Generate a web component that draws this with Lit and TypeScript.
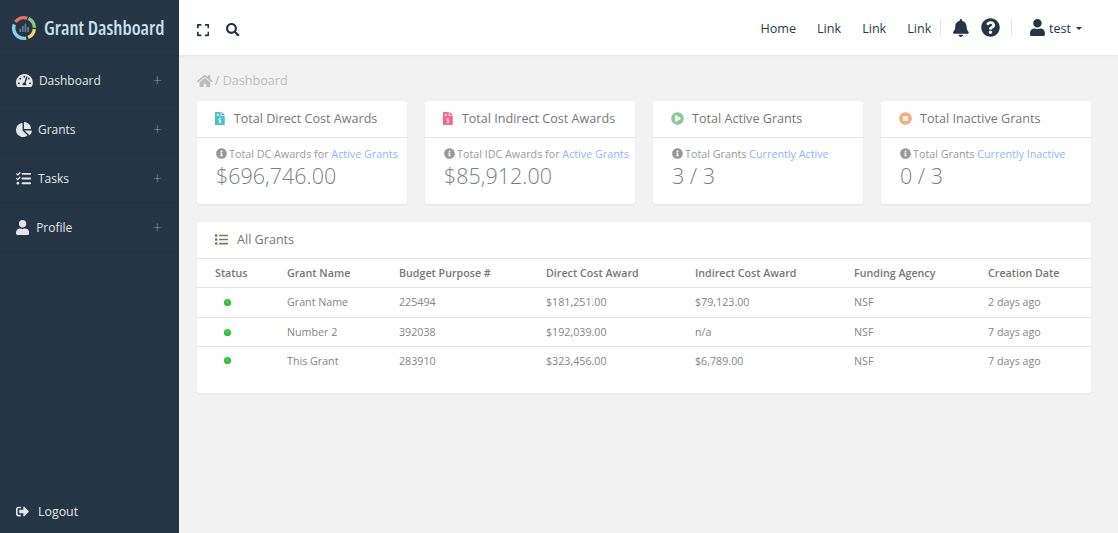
import { LitElement, html, css, svg } from 'lit';
import { customElement } from 'lit/decorators.js';

// font awesome style glyphs, [viewBox width, path]
const ICONS: Record<string, [number, string]> = {
  user: [448, 'M224 256c70.7 0 128-57.3 128-128S294.7 0 224 0 96 57.3 96 128s57.3 128 128 128zm89.6 32h-16.7c-22.2 10.2-46.9 16-72.9 16s-50.6-5.8-72.9-16h-16.7C60.2 288 0 348.2 0 422.4V464c0 26.5 21.5 48 48 48h352c26.5 0 48-21.5 48-48v-41.6c0-74.2-60.2-134.4-134.4-134.4z'],
  bell: [448, 'M224 512c35.32 0 63.97-28.65 63.97-64H160.03c0 35.35 28.65 64 63.97 64zm215.39-149.71c-19.32-20.76-55.47-51.99-55.47-154.29 0-77.7-54.48-139.9-127.94-155.16V32c0-17.67-14.32-32-31.98-32s-31.98 14.33-31.98 32v20.84C118.56 68.1 64.08 130.3 64.08 208c0 102.3-36.15 133.53-55.47 154.29-6 6.45-8.66 14.16-8.61 21.71.11 16.4 12.98 32 32.1 32h383.8c19.12 0 32-15.6 32.1-32 .05-7.55-2.61-15.27-8.61-21.71z'],
  question: [512, 'M504 256c0 136.997-111.043 248-248 248S8 392.997 8 256C8 119.083 119.043 8 256 8s248 111.083 248 248zM262.655 90c-54.497 0-89.255 22.957-116.549 63.758-3.536 5.286-2.353 12.415 2.715 16.258l34.699 26.31c5.205 3.947 12.621 3.008 16.665-2.122 17.864-22.658 30.113-35.797 57.303-35.797 20.429 0 45.698 13.148 45.698 32.958 0 14.976-12.363 22.667-32.534 33.976C247.128 238.528 216 254.941 216 296v4c0 6.627 5.373 12 12 12h56c6.627 0 12-5.373 12-12v-1.333c0-28.462 83.186-29.647 83.186-106.667 0-58.002-60.165-102-116.531-102zM256 338c-25.365 0-46 20.635-46 46 0 25.364 20.635 46 46 46s46-20.636 46-46c0-25.365-20.635-46-46-46z'],
  search: [512, 'M505 442.7L405.3 343c-4.5-4.5-10.6-7-17-7H372c27.6-35.3 44-79.7 44-128C416 93.1 322.9 0 208 0S0 93.1 0 208s93.1 208 208 208c48.3 0 92.7-16.4 128-44v16.3c0 6.4 2.5 12.5 7 17l99.7 99.7c9.4 9.4 24.6 9.4 33.9 0l28.3-28.3c9.4-9.4 9.4-24.6.1-34zM208 336c-70.7 0-128-57.2-128-128 0-70.7 57.2-128 128-128 70.7 0 128 57.2 128 128 0 70.7-57.2 128-128 128z'],
  expand: [448, 'M0 180V56c0-13.3 10.7-24 24-24h124c6.6 0 12 5.4 12 12v40c0 6.6-5.4 12-12 12H64v84c0 6.6-5.4 12-12 12H12c-6.6 0-12-5.4-12-12zM288 44v40c0 6.6 5.4 12 12 12h84v84c0 6.6 5.4 12 12 12h40c6.6 0 12-5.4 12-12V56c0-13.3-10.7-24-24-24H300c-6.6 0-12 5.4-12 12zm148 276h-40c-6.6 0-12 5.4-12 12v84h-84c-6.6 0-12 5.4-12 12v40c0 6.6 5.4 12 12 12h124c13.3 0 24-10.7 24-24V332c0-6.6-5.4-12-12-12zM160 468v-40c0-6.6-5.4-12-12-12H64v-84c0-6.6-5.4-12-12-12H12c-6.6 0-12 5.4-12 12v124c0 13.3 10.7 24 24 24h124c6.6 0 12-5.4 12-12z'],
  info: [512, 'M256 8C119.043 8 8 119.083 8 256c0 136.997 111.043 248 248 248s248-111.003 248-248C504 119.083 392.957 8 256 8zm0 110c23.196 0 42 18.804 42 42s-18.804 42-42 42-42-18.804-42-42 18.804-42 42-42zm56 254c0 6.627-5.373 12-12 12h-88c-6.627 0-12-5.373-12-12v-24c0-6.627 5.373-12 12-12h12v-64h-12c-6.627 0-12-5.373-12-12v-24c0-6.627 5.373-12 12-12h64c6.627 0 12 5.373 12 12v100h12c6.627 0 12 5.373 12 12v24z'],
  play: [512, 'M256 8C119 8 8 119 8 256s111 248 248 248 248-111 248-248S393 8 256 8zm115.7 272l-176 101c-15.8 8.8-35.7-2.5-35.7-21V152c0-18.4 19.8-29.8 35.7-21l176 107c16.4 9.2 16.4 32.9 0 42z'],
  stop: [512, 'M256 8C119 8 8 119 8 256s111 248 248 248 248-111 248-248S393 8 256 8zm96 328c0 8.8-7.2 16-16 16H176c-8.8 0-16-7.2-16-16V176c0-8.8 7.2-16 16-16h160c8.8 0 16 7.2 16 16v160z'],
  home: [576, 'M280.37 148.26L96 300.11V464a16 16 0 0 0 16 16l112.06-.29a16 16 0 0 0 15.92-16V368a16 16 0 0 1 16-16h64a16 16 0 0 1 16 16v95.64a16 16 0 0 0 16 16.05L464 480a16 16 0 0 0 16-16V300L295.67 148.26a12.19 12.19 0 0 0-15.3 0zM571.6 251.47L488 182.56V44.05a12 12 0 0 0-12-12h-56a12 12 0 0 0-12 12v72.61L318.47 43a48 48 0 0 0-61 0L4.34 251.47a12 12 0 0 0-1.6 16.9l25.5 31A12 12 0 0 0 45.15 301l235.22-193.74a12.19 12.19 0 0 1 15.3 0L530.9 301a12 12 0 0 0 16.9-1.6l25.5-31a12 12 0 0 0-1.7-16.93z'],
  invoice: [384, 'M377 105L279.1 7c-4.5-4.5-10.6-7-17-7H256v128h128v-6.1c0-6.3-2.5-12.4-7-16.9zm-153 31V0H24C10.7 0 0 10.7 0 24v464c0 13.3 10.7 24 24 24h336c13.3 0 24-10.7 24-24V160H248c-13.2 0-24-10.8-24-24zM64 72c0-4.42 3.58-8 8-8h80c4.42 0 8 3.58 8 8v16c0 4.42-3.58 8-8 8H72c-4.42 0-8-3.58-8-8V72zm0 80v-16c0-4.42 3.58-8 8-8h80c4.42 0 8 3.58 8 8v16c0 4.42-3.58 8-8 8H72c-4.42 0-8-3.58-8-8zm144 263.88V440c0 4.42-3.58 8-8 8h-16c-4.42 0-8-3.58-8-8v-24.29c-11.29-.58-22.27-4.52-31.37-11.35-3.9-2.93-4.1-8.77-.57-12.14l11.75-11.21c2.77-2.64 6.89-2.76 10.13-.73 3.87 2.42 8.26 3.72 12.82 3.72h28.11c6.5 0 11.8-5.92 11.8-13.19 0-5.95-3.61-11.19-8.77-12.73l-45-13.5c-18.59-5.58-31.58-23.42-31.58-43.39 0-24.52 19.05-44.44 42.67-45.07V232c0-4.42 3.58-8 8-8h16c4.42 0 8 3.58 8 8v24.29c11.29.58 22.27 4.51 31.37 11.35 3.9 2.93 4.1 8.77.57 12.14l-11.75 11.21c-2.77 2.64-6.89 2.76-10.13.73-3.87-2.43-8.26-3.72-12.82-3.72h-28.11c-6.5 0-11.8 5.92-11.8 13.19 0 5.95 3.61 11.19 8.77 12.73l45 13.5c18.59 5.58 31.58 23.42 31.58 43.39 0 24.53-19.05 44.44-42.67 45.07z'],
  gauge: [576, 'M288 32C128.94 32 0 160.94 0 320c0 52.8 14.25 102.26 39.06 144.8 5.61 9.62 16.3 15.2 27.44 15.2h443c11.14 0 21.83-5.58 27.44-15.2C561.75 422.26 576 372.8 576 320c0-159.06-128.94-288-288-288zm0 64c14.71 0 26.58 10.13 30.32 23.65-1.11 2.26-2.64 4.23-3.45 6.67l-9.22 27.67c-5.13 3.49-10.97 6.01-17.64 6.01-17.67 0-32-14.33-32-32S270.33 96 288 96zM96 384c-17.67 0-32-14.33-32-32s14.33-32 32-32 32 14.33 32 32-14.33 32-32 32zm48-160c-17.67 0-32-14.33-32-32s14.33-32 32-32 32 14.33 32 32-14.33 32-32 32zm246.77-72.41l-61.33 184C343.13 347.33 352 364.54 352 384c0 11.72-3.38 22.55-8.88 32H232.88c-5.5-9.45-8.88-20.28-8.88-32 0-33.94 26.5-61.43 59.9-63.59l61.34-184.01c4.17-12.56 17.73-19.45 30.36-15.17 12.57 4.19 19.35 17.79 15.17 30.36zm14.66 57.2l15.52-46.55c3.47-1.29 7.13-2.23 11.05-2.23 17.67 0 32 14.33 32 32s-14.33 32-32 32c-11.38-.01-20.89-6.28-26.57-15.22zM480 384c-17.67 0-32-14.33-32-32s14.33-32 32-32 32 14.33 32 32-14.33 32-32 32z'],
  pie: [544, 'M527.79 288H290.5l158.03 158.03c6.04 6.04 15.98 6.53 22.19.68 38.7-36.46 65.32-85.61 73.13-140.86 1.34-9.46-6.51-17.85-16.06-17.85zm-15.83-64.8C503.72 103.74 408.26 8.28 288.8.04 279.68-.59 272 7.1 272 16.24V240h223.77c9.14 0 16.82-7.68 16.19-16.8zM224 288V50.71c0-9.55-8.39-17.4-17.84-16.06C86.99 51.49-4.1 155.6.14 280.37 4.5 408.51 114.83 513.59 243.03 511.98c50.4-.63 96.97-16.87 135.26-44.03 7.9-5.6 8.42-17.23 1.57-24.08L224 288z'],
  tasks: [512, 'M139.61 35.5a12 12 0 0 0-17 0L58.93 98.81l-22.7-22.12a12 12 0 0 0-17 0L3.53 92.41a12 12 0 0 0 0 17l47.59 47.4a12.78 12.78 0 0 0 17.61 0l15.59-15.62L156.52 69a12.09 12.09 0 0 0 .09-17zm0 159.19a12 12 0 0 0-17 0l-63.68 63.72-22.7-22.1a12 12 0 0 0-17 0L3.53 252a12 12 0 0 0 0 17L51 316.5a12.77 12.77 0 0 0 17.6 0l15.7-15.69 72.2-72.22a12 12 0 0 0 .09-16.9zM64 368c-26.49 0-48.59 21.5-48.59 48S37.53 464 64 464a48 48 0 0 0 0-96zm432 16H208a16 16 0 0 0-16 16v32a16 16 0 0 0 16 16h288a16 16 0 0 0 16-16v-32a16 16 0 0 0-16-16zm0-320H208a16 16 0 0 0-16 16v32a16 16 0 0 0 16 16h288a16 16 0 0 0 16-16V80a16 16 0 0 0-16-16zm0 160H208a16 16 0 0 0-16 16v32a16 16 0 0 0 16 16h288a16 16 0 0 0 16-16v-32a16 16 0 0 0-16-16z'],
  list: [512, 'M80 368H16a16 16 0 0 0-16 16v64a16 16 0 0 0 16 16h64a16 16 0 0 0 16-16v-64a16 16 0 0 0-16-16zm0-320H16A16 16 0 0 0 0 64v64a16 16 0 0 0 16 16h64a16 16 0 0 0 16-16V64a16 16 0 0 0-16-16zm0 160H16a16 16 0 0 0-16 16v64a16 16 0 0 0 16 16h64a16 16 0 0 0 16-16v-64a16 16 0 0 0-16-16zm416 176H176a16 16 0 0 0-16 16v32a16 16 0 0 0 16 16h320a16 16 0 0 0 16-16v-32a16 16 0 0 0-16-16zm0-320H176a16 16 0 0 0-16 16v32a16 16 0 0 0 16 16h320a16 16 0 0 0 16-16V80a16 16 0 0 0-16-16zm0 160H176a16 16 0 0 0-16 16v32a16 16 0 0 0 16 16h320a16 16 0 0 0 16-16v-32a16 16 0 0 0-16-16z'],
  logout: [512, 'M497 273L329 441c-15 15-41 4.5-41-17v-96H152c-13.3 0-24-10.7-24-24v-96c0-13.3 10.7-24 24-24h136V88c0-21.4 25.9-32 41-17l168 168c9.3 9.4 9.3 24.6 0 34zM192 436v-40c0-6.6-5.4-12-12-12H96c-17.7 0-32-14.3-32-32V160c0-17.7 14.3-32 32-32h84c6.6 0 12-5.4 12-12V76c0-6.6-5.4-12-12-12H96c-53 0-96 43-96 96v192c0 53 43 96 96 96h84c6.6 0 12-5.4 12-12z'],
};

const icon = (name: string, size: number) => {
  const [w, d] = ICONS[name];
  return html`<svg class="icon" viewBox="0 0 ${w} 512" height=${size} width=${(size * w) / 512} fill="currentColor"><path d=${d}></path></svg>`;
};

const MENU = [
  { label: 'Dashboard', icon: 'gauge', gap: 'g-dash' },
  { label: 'Grants', icon: 'pie', gap: 'g-grants' },
  { label: 'Tasks', icon: 'tasks', gap: 'g-tasks' },
  { label: 'Profile', icon: 'user', gap: 'g-profile' },
];

const CARDS = [
  { title: 'Total Direct Cost Awards', icon: 'invoice', tone: 'teal', head: '', note: 'Total DC Awards for ', link: 'Active Grants', value: '$696,746.00' },
  { title: 'Total Indirect Cost Awards', icon: 'invoice', tone: 'pink', head: '', note: 'Total IDC Awards for ', link: 'Active Grants', value: '$85,912.00' },
  { title: 'Total Active Grants', icon: 'play', tone: 'green', head: 'tight', note: 'Total Grants ', link: 'Currently Active', value: '3 / 3' },
  { title: 'Total Inactive Grants', icon: 'stop', tone: 'orange', head: 'tight', note: 'Total Grants ', link: 'Currently Inactive', value: '0 / 3' },
];

const COLUMNS = ['Status', 'Grant Name', 'Budget Purpose #', 'Direct Cost Award', 'Indirect Cost Award', 'Funding Agency', 'Creation Date'];

const GRANTS = [
  ['Grant Name', '225494', '$181,251.00', '$79,123.00', 'NSF', '2 days ago'],
  ['Number 2', '392038', '$192,039.00', 'n/a', 'NSF', '7 days ago'],
  ['This Grant', '283910', '$323,456.00', '$6,789.00', 'NSF', '7 days ago'],
];

// ring segments of the logo, drawn with a dashed circle
const LOGO_ARCS = [
  { color: '#e8705f', start: 215, sweep: 72 },
  { color: '#8fc77e', start: 295, sweep: 63 },
  { color: '#f1d66b', start: 6, sweep: 60 },
  { color: '#7fd6ea', start: 78, sweep: 122 },
];

@customElement('app-root')
export class AppRoot extends LitElement {
  static styles = css`
    :host {
      display: flex;
      height: 533px;
      overflow: hidden;
      font-family: 'Open Sans', sans-serif;
      font-size: 12.6px;
      color: #777;
      background: #f2f2f2;
    }

    .icon {
      display: block;
      flex: none;
    }

    .sidebar {
      width: 179px;
      flex: none;
      display: flex;
      flex-direction: column;
      background: #263544;
      color: #e3e6e8;
    }

    .brand {
      height: 56px;
      flex: none;
      display: flex;
      align-items: center;
      gap: 7px;
      padding-left: 11px;
      box-sizing: border-box;
      border-bottom: 1px solid #233140;
    }

    .brand-name {
      font-size: 19.3px;
      font-weight: 600;
      font-stretch: 75%;
      color: #c6e2ee;
      white-space: nowrap;
    }

    .menu-item {
      height: 49px;
      flex: none;
      display: flex;
      align-items: center;
      padding: 0 17px 0 16px;
      box-sizing: border-box;
      font-size: 12px;
      border-bottom: 1px solid #233140;
    }

    .menu-item .label {
      flex: 1;
    }

    .g-dash { margin-right: 6px; }
    .g-grants { margin-right: 6px; }
    .g-tasks { margin-right: 7px; }
    .g-profile { margin-right: 7px; }

    .plus {
      color: #8b949d;
      font-size: 16px;
      font-weight: 300;
      line-height: 1;
    }

    .logout {
      margin-top: auto;
      height: 44px;
      flex: none;
      display: flex;
      align-items: center;
      gap: 9px;
      padding-left: 16px;
      font-size: 12.4px;
    }

    .main {
      flex: 1;
      min-width: 0;
      display: flex;
      flex-direction: column;
    }

    .topbar {
      height: 55px;
      flex: none;
      display: flex;
      align-items: center;
      padding: 0 36px 0 18px;
      box-sizing: border-box;
      background: #fff;
      color: #263544;
      box-shadow: 0 1px 3px rgba(0, 0, 0, 0.06);
      position: relative;
    }

    .tools {
      display: flex;
      align-items: center;
      gap: 17px;
      flex: 1;
      margin-top: 4px;
    }

    .nav {
      display: flex;
      align-items: center;
      gap: 21px;
      margin-right: 9px;
      padding-top: 2px;
      color: #2c3a47;
    }

    .sep {
      width: 1px;
      height: 17px;
      background: #e4e4e4;
    }

    .alerts {
      display: flex;
      align-items: center;
      gap: 12px;
      margin: 0 11px 0 12px;
    }

    .account {
      display: flex;
      align-items: center;
      gap: 4px;
      margin-left: 18px;
    }

    .account span:first-of-type {
      padding-top: 2px;
    }

    .caret {
      width: 0;
      height: 0;
      margin: 2px 0 0 1px;
      border: 3.5px solid transparent;
      border-top-color: #263544;
      border-bottom: 0;
    }

    .content {
      flex: 1;
      padding: 16px 27px 0 18px;
    }

    .crumb {
      display: flex;
      align-items: center;
      gap: 2px;
      height: 19px;
      color: #bdbdbd;
    }

    .cards {
      display: grid;
      grid-template-columns: repeat(4, 210px);
      gap: 18px;
      margin-top: 11px;
    }

    .card {
      background: #fff;
      border-radius: 3px;
      box-shadow: 0 1px 2px rgba(0, 0, 0, 0.06);
    }

    .card-head {
      height: 37px;
      display: flex;
      align-items: center;
      gap: 9px;
      padding: 0 0 2px 18px;
      box-sizing: border-box;
      border-bottom: 1px solid #e6e6e6;
      white-space: nowrap;
    }

    .card-head.tight {
      gap: 8px;
    }

    .teal { color: #4fc1bd; }
    .pink { color: #f9648a; }
    .green { color: #8ccb96; }
    .orange { color: #fcab80; }

    .card-body {
      height: 66px;
      padding: 8px 0 0 19px;
      box-sizing: border-box;
    }

    .note {
      display: flex;
      align-items: center;
      gap: 2px;
      font-size: 10.75px;
      height: 15px;
      color: #999;
      white-space: pre;
    }

    .note a {
      color: #8fb4fb;
    }

    .value {
      font-size: 21.5px;
      font-weight: 300;
      line-height: 30px;
      color: #7a7f83;
    }

    .table-card {
      margin-top: 18px;
      height: 171px;
    }

    .table-head {
      gap: 9px;
    }

    .row {
      display: grid;
      grid-template-columns: 72px 112px 147px 149px 159px 134px 1fr;
      align-items: center;
      padding-left: 18px;
      font-size: 10.7px;
      height: 29px;
      box-sizing: border-box;
      color: #858585;
      border-bottom: 1px solid #e6e6e6;
    }

    .row.header {
      padding-bottom: 1px;
      font-weight: 600;
      color: #777;
    }

    .row:nth-child(3) {
      height: 30px;
      padding-bottom: 1px;
    }

    .row:last-child {
      padding-bottom: 2px;
      border-bottom: 0;
    }

    .dot {
      width: 7px;
      height: 7px;
      margin-left: 9px;
      border-radius: 50%;
      background: radial-gradient(circle at 50% 40%, #4be04b, #0f9d1a);
    }
  `;

  private renderLogo() {
    const r = 10.4;
    const c = 2 * Math.PI * r;
    return html`
      <svg viewBox="0 0 26 26" width="26" height="26" class="icon">
        ${LOGO_ARCS.map(
          (a) => svg`<circle cx="13" cy="13" r=${r} fill="none" stroke=${a.color} stroke-width="3.4"
            stroke-dasharray="${(a.sweep / 360) * c} ${c}" transform="rotate(${a.start} 13 13)"></circle>`
        )}
        <rect x="8.4" y="13.5" width="1.6" height="3.5" fill="#5f7f9c"></rect>
        <rect x="11" y="11" width="1.6" height="6" fill="#5f7f9c"></rect>
        <rect x="13.6" y="8.5" width="1.6" height="8.5" fill="#5f7f9c"></rect>
        <rect x="16.2" y="12" width="1.6" height="5" fill="#5f7f9c"></rect>
      </svg>
    `;
  }

  render() {
    return html`
      <aside class="sidebar">
        <div class="brand">${this.renderLogo()}<span class="brand-name">Grant Dashboard</span></div>
        ${MENU.map(
          (m) => html`
            <div class="menu-item">
              <span class=${m.gap}>${icon(m.icon, 15)}</span>
              <span class="label">${m.label}</span>
              <span class="plus">+</span>
            </div>
          `
        )}
        <div class="logout">${icon('logout', 13)}<span>Logout</span></div>
      </aside>
      <div class="main">
        <header class="topbar">
          <div class="tools">${icon('expand', 14)}${icon('search', 13.5)}</div>
          <nav class="nav">
            <span>Home</span><span>Link</span><span>Link</span><span>Link</span>
          </nav>
          <div class="sep"></div>
          <div class="alerts">${icon('bell', 18)}${icon('question', 19)}</div>
          <div class="sep"></div>
          <div class="account">${icon('user', 17)}<span>test</span><span class="caret"></span></div>
        </header>
        <main class="content">
          <div class="crumb">${icon('home', 14)}<span>/ Dashboard</span></div>
          <section class="cards">
            ${CARDS.map(
              (c) => html`
                <div class="card">
                  <div class="card-head ${c.head}">
                    <span class=${c.tone}>${icon(c.icon, 13)}</span>
                    <span>${c.title}</span>
                  </div>
                  <div class="card-body">
                    <div class="note">${icon('info', 11)}<span>${c.note}<a>${c.link}</a></span></div>
                    <div class="value">${c.value}</div>
                  </div>
                </div>
              `
            )}
          </section>
          <section class="card table-card">
            <div class="card-head table-head">
              <span style="color:#7d7764">${icon('list', 13)}</span>
              <span>All Grants</span>
            </div>
            <div class="row header">${COLUMNS.map((c) => html`<span>${c}</span>`)}</div>
            ${GRANTS.map(
              (g) => html`
                <div class="row">
                  <span class="dot"></span>
                  ${g.map((v) => html`<span>${v}</span>`)}
                </div>
              `
            )}
          </section>
        </main>
      </div>
    `;
  }
}

declare global {
  interface HTMLElementTagNameMap {
    'app-root': AppRoot;
  }
}
